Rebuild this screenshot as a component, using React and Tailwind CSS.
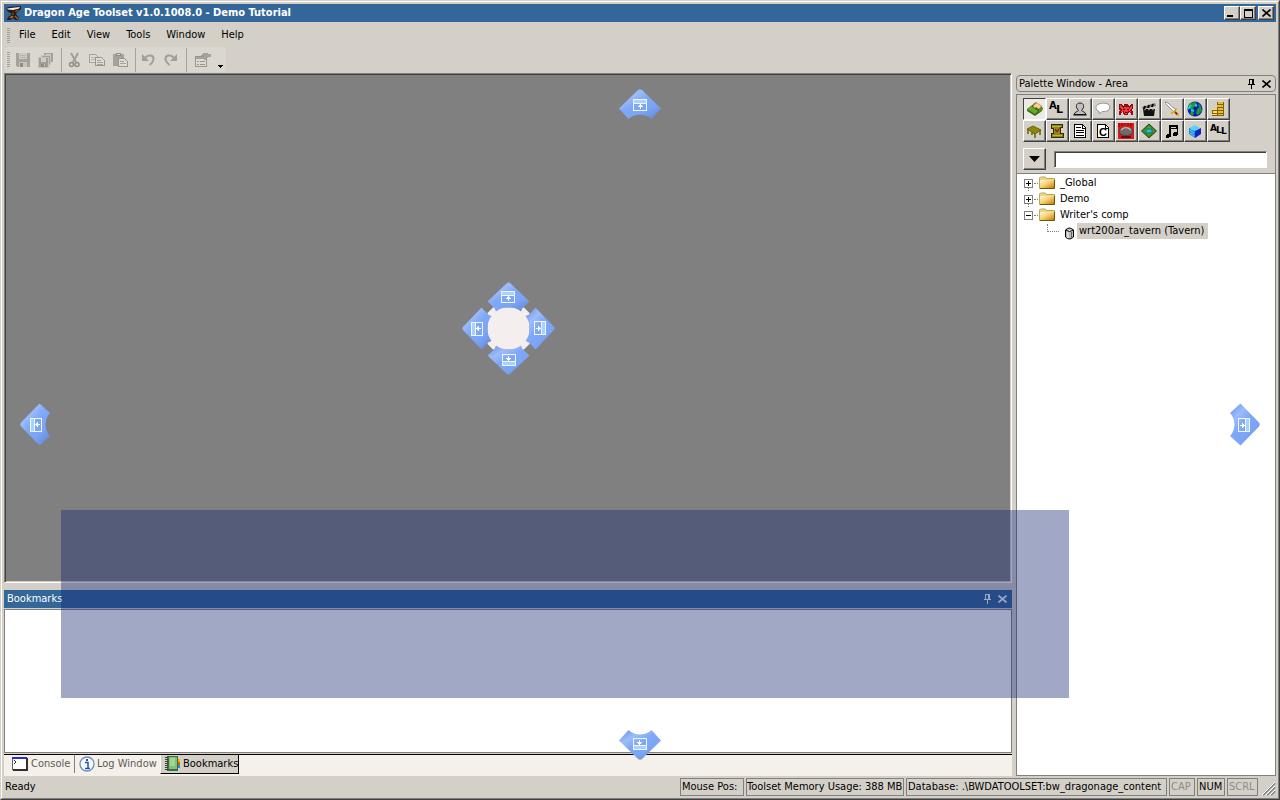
import { useState } from 'react';

const menus = ['File', 'Edit', 'View', 'Tools', 'Window', 'Help'];

const raised =
  'border border-t-white border-l-white border-r-[#404040] border-b-[#404040] shadow-[inset_-1px_-1px_0_#808080]';

function Svg({ children, size = 16, crisp = true }) {
  return (
    <svg
      width={size}
      height={size}
      viewBox="0 0 16 16"
      fill="none"
      shapeRendering={crisp ? 'crispEdges' : 'auto'}
      className="shrink-0"
      aria-hidden="true"
    >
      {children}
    </svg>
  );
}

function AnvilIcon() {
  return (
    <Svg crisp={false}>
      <path d="M0 3l3-1 12-1v3l-4 3-1 2 3 4-1 2H9l-2-2-3 2H1l1-3 3-2V8L2 7z" fill="#2a1a12" />
      <path d="M1 3.500l4-.5 9-1-1 1.500-6 1.500-5-.5z" fill="#f2efe8" />
      <path d="M9 6l4-2-3 3zM3 13l3-2.500L8 12l-3 1z" fill="#b5702c" />
      <path d="M9 11l3 3" stroke="#a0622c" strokeWidth="1.500" />
      <path d="M7 7v3" stroke="#7b5a40" />
    </Svg>
  );
}

/* Toolbar icons, all in the disabled colours */
function SaveIcon() {
  return (
    <Svg>
      <path d="M1 1h14v14H2l-1-1z" fill="#a5a29c" />
      <path d="M4 1h8v6H4z" fill="#cfccc5" />
      <path d="M5 3h6M5 5h6" stroke="#b5b2ab" />
      <path d="M4 10h8v5H4z" fill="#c6c3bc" />
      <path d="M5 11h3v4H5z" fill="#8f8c86" />
    </Svg>
  );
}

function SaveAllIcon() {
  return (
    <Svg>
      <path d="M6 1h9v9H6z" fill="#a5a29c" />
      <path d="M8 2h5v1H8z" fill="#cfccc5" />
      <path d="M3.500 3.500h9v9h-9z" fill="#a5a29c" stroke="#c6c3bc" />
      <path d="M6 5h5v1H6z" fill="#cfccc5" />
      <path d="M.5 5.500h10v10H.5z" fill="#a09d97" stroke="#c6c3bc" />
      <path d="M3 6h5v4H3z" fill="#cfccc5" />
      <path d="M3 12h5v3H3z" fill="#8f8c86" />
      <path d="M6 12h1v2H6z" fill="#cfccc5" />
    </Svg>
  );
}

function CutIcon() {
  return (
    <Svg crisp={false}>
      <path d="M5 1l5 9M12 1L7 10" stroke="#a19e98" strokeWidth="2" />
      <circle cx="5.500" cy="12.500" r="2" stroke="#8f8c86" strokeWidth="1.500" />
      <circle cx="11" cy="12.500" r="2" stroke="#8f8c86" strokeWidth="1.500" />
    </Svg>
  );
}

function CopyIcon() {
  return (
    <Svg>
      <path d="M.5 2.500h6l3 3v5h-9z" fill="#dedbd4" stroke="#a5a29c" />
      <path d="M2 5h4M2 7h4" stroke="#b8b5ae" />
      <path d="M6.500 5.500h6l3 3v5h-9z" fill="#dedbd4" stroke="#999690" />
      <path d="M8 8.500h4M8 10.500h6M8 12h6" stroke="#a5a29c" />
    </Svg>
  );
}

function PasteIcon() {
  return (
    <Svg>
      <path d="M1 2h11v12H1z" fill="#a5a29c" />
      <path d="M4 1h5v3H4z" fill="#8f8c86" />
      <path d="M5 2h3v1H5z" fill="#dedbd4" />
      <path d="M6.500 6.500h6l3 3v5h-9z" fill="#dedbd4" stroke="#999690" />
      <path d="M8 9.500h4M8 11.500h6" stroke="#a5a29c" />
    </Svg>
  );
}

function UndoIcon() {
  return (
    <Svg crisp={false}>
      <path d="M5 6c3-4 9-3 8.500 1.500-.3 2.500-2 4-4 5.500" stroke="#a19e98" strokeWidth="2" />
      <path d="M2 2v7h7z" fill="#a19e98" />
    </Svg>
  );
}

function RedoIcon() {
  return (
    <Svg crisp={false}>
      <path d="M11 6C8 2 2 3 2.500 7.500c.3 2.500 2 3.500 4 5.500" stroke="#a19e98" strokeWidth="2" />
      <path d="M14 2v7H7z" fill="#a19e98" />
    </Svg>
  );
}

function PropertiesIcon() {
  return (
    <Svg>
      <path d="M.5 4.500h11v10H.5z" fill="#dedbd4" stroke="#999690" />
      <path d="M1 5h10v2H1z" fill="#a5a29c" />
      <path d="M2 9.500h2M5 9.500h5M2 12.500h2M5 12.500h5" stroke="#999690" />
      <path d="M5 4l4-3h4v1h3v3h-3l-3 3-2-1 1-3z" fill="#a5a29c" />
    </Svg>
  );
}

/* Palette icons */
function AreaIcon() {
  return (
    <Svg crisp={false}>
      <path d="M0 8l8-6 8 5-1 3-7 5-8-5z" fill="#3d6818" />
      <path d="M0 8l4-3 7 5-3 3z" fill="#68a82c" />
      <path d="M6 3l3-2 6 4-2 4-6-4z" fill="#c76a20" />
      <path d="M6 5l4-3 4 3-2 3-3-2-1 1z" fill="#f1d190" />
      <path d="M12 8l3-2v3l-3 3z" fill="#568e25" />
    </Svg>
  );
}

function AreaListIcon() {
  return (
    <Svg>
      <text x="0" y="8" fontSize="10" fontWeight="bold" fill="#000" fontFamily="DejaVu Sans">A</text>
      <text x="7" y="12" fontSize="11" fontWeight="bold" fill="#000" fontFamily="DejaVu Sans">L</text>
    </Svg>
  );
}

function CreatureIcon() {
  return (
    <Svg crisp={false}>
      <path
        d="M6.500 9.500C3 6 4 2 8 2s5 4 1.500 7.500c0 1 4 1 4.500 4H2c.5-3 4.500-3 4.500-4z"
        fill="#c0c0c0"
        stroke="#202020"
      />
      <path d="M1.500 14h13" stroke="#000" />
    </Svg>
  );
}

function ConversationIcon() {
  return (
    <Svg crisp={false}>
      <path
        d="M4 10.500C0 9 0 4 4 3c3-1.500 7-1 9 0 3 2 2 6-1 7-2 .8-4 .7-5 .5L4.500 13z"
        fill="#fff"
        stroke="#909090"
      />
    </Svg>
  );
}

function PlotIcon() {
  return (
    <Svg>
      <path
        d="M1 3h2l2 2 1-1V3h4v1l1 1 2-2h2v4l-1 3h1v4h-2v-2l-2-1-1 3H6l-1-3-2 1v2H1v-4h1L1 7z"
        fill="#8c1018"
      />
      <path d="M2 4l3 3 1-1h4l1 1 3-3v3l-2 2 1 2-3-1-1 3H7l-1-3-3 1 1-2-2-2z" fill="#f0353c" />
      <path d="M5 8h2v1H5zM9 8h2v1H9zM7 11h2v1H7z" fill="#600008" />
    </Svg>
  );
}

function CutsceneIcon() {
  return (
    <Svg crisp={false}>
      <path d="M1 6L14 2l1 3L2 8z" fill="#777" />
      <path d="M3 8l1-3M7 7l1-3M11 6l1-3" stroke="#000" strokeWidth="2" />
      <path d="M2 8h12l-1 7H3z" fill="#111" />
      <path d="M3 9l2-1M7 9l2-1M11 9l2-1" stroke="#999" />
    </Svg>
  );
}

function SwordIcon() {
  return (
    <Svg crisp={false}>
      <path d="M1 1l3 1 8 7-2 2-7-7z" fill="#fff" stroke="#8e8e8e" />
      <path d="M2 2l8 8" stroke="#fff" />
      <path d="M7 12.500l2-1 3-3V7" stroke="#d7a800" strokeWidth="1.500" />
      <path d="M11 11l3 3" stroke="#b01b18" strokeWidth="2" />
      <path d="M13 14l2 .5" stroke="#eec000" strokeWidth="2" />
    </Svg>
  );
}

function GlobeIcon() {
  return (
    <Svg crisp={false}>
      <circle cx="8" cy="8" r="7.500" fill="#0b18b0" />
      <path d="M3 2l6-1 1 3-3 2-1 3-3-1-2-3zM10 8l4-3 1 5-4 4-2-1zM4 10l3 2-1 3-3-2zM11 2l3 3-2 1z" fill="#1a9a38" />
      <path d="M1 8l3-4M8 4l2 1M4 9l3 1" stroke="#20d8e0" strokeWidth="2" />
    </Svg>
  );
}

function CoinsIcon() {
  return (
    <Svg>
      <path d="M7 1h7v14H7zM2 8h6v7H2z" fill="#80600e" />
      <path d="M8 1h5v2H8zM7 4h6v2H7zM8 7h5v2H8zM8 10h5v2H8zM8 13h5v1H8z" fill="#e8bd2c" />
      <path d="M2 8h5v1H2zM3 10h4v2H3zM2 13h5v1H2z" fill="#ffe060" />
    </Svg>
  );
}

function TableIcon() {
  return (
    <Svg crisp={false}>
      <path d="M1 6l6-3 8 4-6 4z" fill="#8b8610" stroke="#6b6709" />
      <path d="M2 6v5M9 10v5M14 7v5M6 9v3" stroke="#67620a" strokeWidth="1.500" />
    </Svg>
  );
}

function ScriptIcon() {
  return (
    <Svg>
      <path d="M2.500 1.500h11v3h-2v6h3v4h-12v-4h2v-5h-2z" fill="#8a861a" stroke="#302e05" />
      <path d="M3 3h9M4 12h9" stroke="#bdb936" />
      <path d="M6 6l2 3 3-4" stroke="#9c2218" />
    </Svg>
  );
}

function DocumentIcon() {
  return (
    <Svg>
      <path d="M2.500 1.500h8l3 3v10h-11z" fill="#fff" stroke="#000" />
      <path d="M10.500 1v4h3M4 4.500h5M4 7.500h8M4 9.500h8M4 12.500h8" stroke="#000" />
    </Svg>
  );
}

function ClassIcon() {
  return (
    <Svg>
      <path d="M2.500 1.500h8l3 3v10h-11z" fill="#fff" stroke="#000" />
      <path d="M10.500 1v4h3" stroke="#000" />
      <text x="4" y="13" fontSize="11" fontWeight="bold" fill="#000" fontFamily="Liberation Sans">C</text>
    </Svg>
  );
}

function StageIcon() {
  return (
    <Svg crisp={false}>
      <path d="M0 0h16v16H0z" fill="#dc1a1a" />
      <path d="M1 0v4M4 0v3M7 0v2M10 0v3M13 0v4" stroke="#8e0000" />
      <ellipse cx="8" cy="8.500" rx="7" ry="4" fill="#6c6c6c" stroke="#444" />
      <path d="M3 7c3-3 7-3 10 0" stroke="#bcbcbc" strokeWidth="1.500" />
      <path d="M3 13h10v2H3z" fill="#6d0909" />
    </Svg>
  );
}

function TileIcon() {
  return (
    <Svg crisp={false}>
      <path d="M8 1l7.500 7L8 15 .5 8z" fill="#3c8a2a" stroke="#184410" />
      <path d="M8 3l5 5-5 4-5-4z" fill="#54a03c" />
      <path d="M5 6h6v4H5z" fill="#20c5d2" stroke="#1c6c50" />
      <path d="M8 14.500l6.500-6" stroke="#694812" />
    </Svg>
  );
}

function MusicIcon() {
  return (
    <Svg>
      <path d="M5 2h9v10h-1V6H7v8H5z" fill="#000" />
      <path d="M7 4h5v1H7z" fill="#d4d0c8" />
      <path d="M3 11h3v3H5v1H2v-3h1zM10 9h4v3h-1v1H9v-3h1z" fill="#000" />
    </Svg>
  );
}

function ModelIcon() {
  return (
    <Svg crisp={false}>
      <path d="M2 5l6-3 5 3-5 3z" fill="#50d6f4" />
      <path d="M2 5l6 3v7l-6-4z" fill="#168de0" />
      <path d="M8 8l6-3v6l-6 4z" fill="#1222c0" />
      <path d="M3 7l4 3M3 10l4 3M5 6v6" stroke="#86e6f8" strokeDasharray="1 1" />
    </Svg>
  );
}

function AllIcon() {
  return (
    <svg width="18" height="16" viewBox="0 0 18 16" aria-hidden="true">
      <text x="0" y="8" fontSize="9" fontWeight="bold" fontFamily="DejaVu Sans">A</text>
      <text x="6" y="10" fontSize="9" fontWeight="bold" fontFamily="DejaVu Sans">L</text>
      <text x="11" y="11" fontSize="9" fontWeight="bold" fontFamily="DejaVu Sans">L</text>
    </svg>
  );
}

const paletteItems = [
  { label: 'Area', Icon: AreaIcon },
  { label: 'Area layout', Icon: AreaListIcon },
  { label: 'Creature', Icon: CreatureIcon },
  { label: 'Conversation', Icon: ConversationIcon },
  { label: 'Plot', Icon: PlotIcon },
  { label: 'Cutscene', Icon: CutsceneIcon },
  { label: 'Item', Icon: SwordIcon },
  { label: 'Map', Icon: GlobeIcon },
  { label: 'Merchant', Icon: CoinsIcon },
  { label: 'Placeable', Icon: TableIcon },
  { label: 'Plot script', Icon: ScriptIcon },
  { label: 'Script', Icon: DocumentIcon },
  { label: 'Class', Icon: ClassIcon },
  { label: 'Stage', Icon: StageIcon },
  { label: 'Trigger', Icon: TileIcon },
  { label: 'Sound', Icon: MusicIcon },
  { label: 'Model', Icon: ModelIcon },
  { label: 'All', Icon: AllIcon },
];

const toolbarGroups = [
  [
    { label: 'Save', Icon: SaveIcon },
    { label: 'Save all', Icon: SaveAllIcon },
  ],
  [
    { label: 'Cut', Icon: CutIcon },
    { label: 'Copy', Icon: CopyIcon },
    { label: 'Paste', Icon: PasteIcon },
  ],
  [
    { label: 'Undo', Icon: UndoIcon },
    { label: 'Redo', Icon: RedoIcon },
  ],
];

function PinIcon() {
  return (
    <svg width="9" height="10" viewBox="0 0 9 10" fill="none" stroke="currentColor" shapeRendering="crispEdges" aria-hidden="true">
      <path d="M2.500 5V.5h4V5M5.500 1v4M1 5.500h7M4.500 6v4" />
    </svg>
  );
}

function CloseIcon() {
  return (
    <svg width="9" height="8" viewBox="0 0 9 8" fill="none" stroke="currentColor" aria-hidden="true">
      <path d="M.5.5l8 7M8.500.5l-8 7" strokeWidth="1.600" />
    </svg>
  );
}

function Grip() {
  return (
    <svg width="3" height="15" viewBox="0 0 3 15" shapeRendering="crispEdges" aria-hidden="true">
      <path d="M1.500 0v15" stroke="#a19e97" strokeWidth="3" strokeDasharray="1 1" />
    </svg>
  );
}

/* The light always comes from the upper left, so the gradient is turned back by the guide's angle */
function GuideGradient({ id, angle }) {
  return (
    <linearGradient id={id} x1="0.1" y1="0" x2="0.9" y2="1" gradientTransform={`rotate(${-angle} 0.5 0.5)`}>
      <stop offset="0" stopColor="#6b95e6" />
      <stop offset="0.250" stopColor="#9dbcfa" />
      <stop offset="0.450" stopColor="#7fa8f8" />
      <stop offset="0.700" stopColor="#7ba4f6" />
      <stop offset="1" stopColor="#6288d4" />
    </linearGradient>
  );
}

function GuideGlyph() {
  return (
    <g shapeRendering="crispEdges">
      <path d="M14 10h14v4H14z" fill="#a9d1ff" />
      <path d="M14.500 10.500h13v11h-13zM14 14.500h14" fill="none" stroke="#eef7ff" />
      <path d="M21 15h1v1h1v1h1v1h-2v2h-1v-2h-2v-1h1v-1h1z" fill="#fff" />
    </g>
  );
}

const guideTurn = {
  top: { w: 42, h: 31, angle: 0, transform: undefined },
  bottom: { w: 42, h: 31, angle: 180, transform: 'rotate(180 21 15.5)' },
  left: { w: 31, h: 43, angle: -90, transform: 'translate(0 42) rotate(-90)' },
  right: { w: 31, h: 43, angle: 90, transform: 'translate(31 0) rotate(90)' },
};

function DockGuide({ side, className }) {
  const { w, h, angle, transform } = guideTurn[side];
  return (
    <svg width={w} height={h} viewBox={`0 0 ${w} ${h}`} className={`absolute ${className}`} aria-hidden="true">
      <GuideGradient id={`guide-${side}`} angle={angle} />
      <g transform={transform}>
        <path
          d="M19 1q2-1.500 4 0l19 18.500L32.500 30 30 28q-9-5-18 0l-2.500 2L0 19.500z"
          fill={`url(#guide-${side})`}
        />
        <GuideGlyph />
      </g>
    </svg>
  );
}

function CenterGuide() {
  return (
    <svg
      width="94"
      height="94"
      viewBox="-1 -1 94 94"
      className="absolute top-1/2 left-1/2 -translate-x-1/2 -translate-y-1/2"
      aria-hidden="true"
    >
      <path d="M31 25.500h31l5.500 5.500v31L62 67.500H31L25.500 62V31z" fill="#f4eeee" />
      {[0, 90, 180, 270].map((angle) => (
        <g key={angle} transform={`rotate(${angle} 46.5 46.5)`}>
          <GuideGradient id={`guide-center-${angle}`} angle={angle} />
          <path
            d="M45 1q1.500-1.500 3 0l19.500 18.500-7 6.500-1.500 3.500A21 21 0 0 0 34 29.500L32.500 26l-7-6.500z"
            fill={`url(#guide-center-${angle})`}
          />
          <g transform="translate(25 -1)">
            <GuideGlyph />
          </g>
        </g>
      ))}
      <circle cx="46.500" cy="46.500" r="20.500" fill="#f4eeee" />
    </svg>
  );
}

function TitleBar() {
  const button = `flex h-[14px] items-center justify-center bg-[#d4d0c8] ${raised}`;
  return (
    <header className="flex h-[18px] shrink-0 items-center bg-[#336699] pr-0.5 pl-0.5 text-white">
      <AnvilIcon />
      <h1 className="ml-0.5 flex-1 truncate font-['DejaVu_Sans_Condensed','DejaVu_Sans',sans-serif] text-[11px] font-bold">
        Dragon Age Toolset v1.0.1008.0 - Demo Tutorial
      </h1>
      <button type="button" aria-label="Minimize" className={`${button} w-4`}>
        <span className="mt-1.5 mr-1 h-0.5 w-1.5 bg-black" />
      </button>
      <button type="button" aria-label="Maximize" className={`${button} w-4`}>
        <span className="h-[9px] w-[9px] border border-t-2 border-black" />
      </button>
      <button type="button" aria-label="Close" className={`${button} ml-0.5 w-4 text-black`}>
        <CloseIcon />
      </button>
    </header>
  );
}

function Toolbar() {
  return (
    <div className="ml-px flex h-[25px] w-[221px] items-center rounded bg-[#dad7cf] pl-0.5">
      <Grip />
      <div className="ml-0.5 flex h-full items-center">
        {toolbarGroups.map((group) => (
          <div key={group[0].label} className="mr-px flex h-6 items-center border-r border-[#a5a29c] pr-[3px]">
            {group.map(({ label, Icon }) => (
              <button
                key={label}
                type="button"
                aria-label={label}
                disabled
                className="flex h-6 w-[23px] items-center justify-start pl-[3px]"
              >
                <Icon />
              </button>
            ))}
          </div>
        ))}
        <button type="button" aria-label="Properties" disabled className="ml-1 flex h-6 w-[22px] items-center justify-center">
          <PropertiesIcon />
        </button>
        <button type="button" aria-label="Toolbar options" className="flex h-6 w-3 items-end justify-center pb-1">
          <svg width="5" height="3" viewBox="0 0 5 3" shapeRendering="crispEdges" aria-hidden="true">
            <path d="M0 0h5v1H4v1H3v1H2V2H1V1H0z" />
          </svg>
        </button>
      </div>
    </div>
  );
}

function BookmarksPanel() {
  return (
    <section className="flex h-[186px] shrink-0 flex-col">
      <div className="flex h-[18px] shrink-0 items-center bg-[#336699] pr-[5px] pl-[3px] text-white">
        <h2 className="flex-1">Bookmarks</h2>
        <button type="button" aria-label="Pin bookmarks" className="mr-1.5">
          <PinIcon />
        </button>
        <button type="button" aria-label="Close bookmarks">
          <CloseIcon />
        </button>
      </div>
      <div className="mt-px flex-1 border border-[#808080] bg-white" />
      <nav className="mt-px flex h-[22px] shrink-0 items-start border-t border-black bg-[#f5f0ea] pl-2 text-[#5c5a56]">
        <button type="button" className="flex h-[18px] w-[63px] items-center gap-[3px] border-r border-[#808080]">
          <Svg>
            <path d="M1 2h15v13H1z" fill="#303030" />
            <path d="M1 3h13v10H1z" fill="#fff" />
            <path d="M0 1h15v2H0z" fill="#2a2ad0" />
            <path d="M0 3.500h1M.5 3v11" stroke="#606060" />
            <path d="M2 4l2 2-2 2" stroke="#303030" />
          </Svg>
          Console
        </button>
        <button type="button" className="flex h-[18px] w-[85px] items-center gap-0.5 pl-1">
          <Svg crisp={false}>
            <circle cx="8" cy="8" r="7" fill="#f5f9fd" stroke="#6f92b4" strokeWidth="1.300" />
            <path d="M6 6.500h3v5.500M6 12.500h5" stroke="#2554a8" strokeWidth="1.500" />
            <path d="M7 3h2v2H7z" fill="#2554a8" />
          </Svg>
          Log Window
        </button>
        <button
          type="button"
          className="flex h-[19px] w-[79px] items-center gap-0.5 border-r border-b border-l border-r-black border-b-black border-l-white bg-[#d4d0c8] pl-1 text-black"
        >
          <Svg>
            <path d="M2 0h11v15H2z" fill="#3c6f38" />
            <path d="M4 1h8v12H4z" fill="#7fbf76" />
            <path d="M5 2h5v8H5z" fill="#a2d49a" />
            <path d="M1.500 1v14" stroke="#404040" strokeWidth="3" strokeDasharray="1 1" />
            <path d="M13 3h2v3h-2z" fill="#f0b400" />
            <path d="M13 6h2v3h-2z" fill="#e0541c" />
            <path d="M13 9h2v3h-2z" fill="#2b8ad8" />
          </Svg>
          Bookmarks
        </button>
      </nav>
    </section>
  );
}

function FolderIcon() {
  return (
    <svg width="16" height="14" viewBox="0 0 16 14" className="shrink-0" aria-hidden="true">
      <defs>
        <linearGradient id="folder" x1="0" y1="0" x2="1" y2="1">
          <stop offset="0" stopColor="#fff6d0" />
          <stop offset="0.450" stopColor="#f6d57a" />
          <stop offset="1" stopColor="#c87c00" />
        </linearGradient>
      </defs>
      <path d="M.5 2l1-1h5l1 1.500h8v10H.5z" fill="#efd58c" stroke="#c0a458" />
      <path d="M1 4h14v8H1z" fill="url(#folder)" />
      <path d="M1 12.500h14.500V4" fill="none" stroke="#6f5414" />
    </svg>
  );
}

function TreeFolder({ label, open, last, onToggle }) {
  return (
    <li className="flex h-4 items-center">
      <button
        type="button"
        onClick={onToggle}
        aria-expanded={open}
        aria-label={label}
        className="flex h-4 w-[9px] items-center justify-center"
      >
        <svg width="9" height="16" viewBox="0 0 9 16" fill="none" shapeRendering="crispEdges" aria-hidden="true">
          {!last && <path d="M4.500 13v3" stroke="#808080" strokeDasharray="1 1" />}
          <path d="M.5 4.500h8v8h-8z" fill="#fff" stroke="#808080" />
          <path d={open ? 'M2 8.500h5' : 'M2 8.500h5M4.500 6v5'} stroke="#000" />
        </svg>
      </button>
      <span className="mr-px ml-px w-1 border-t border-dotted border-[#808080]" />
      <FolderIcon />
      <span className="ml-[5px]">{label}</span>
    </li>
  );
}

function PalettePanel() {
  const [active, setActive] = useState('Area');
  const [filter, setFilter] = useState('');
  const [open, setOpen] = useState(true);

  return (
    <aside className="flex w-[260px] shrink-0 flex-col pt-0.5">
      <div className="flex h-[17px] shrink-0 items-center rounded-sm border border-[#808080] pr-1 pl-0.5">
        <h2 className="flex-1">Palette Window - Area</h2>
        <button type="button" aria-label="Pin palette" className="mr-1.5">
          <PinIcon />
        </button>
        <button type="button" aria-label="Close palette">
          <CloseIcon />
        </button>
      </div>
      <div className="mt-0.5 flex flex-1 flex-col border border-[#808080]">
        <div className="border-b border-[#808080] pt-[3px] pr-2 pb-[3px] pl-1.5">
          <div className="grid w-[207px] grid-cols-9">
            {paletteItems.map(({ label, Icon }) => (
              <button
                key={label}
                type="button"
                aria-label={label}
                onClick={() => setActive(label)}
                className={
                  active === label
                    ? 'flex h-[22px] items-center border border-t-[#404040] border-r-white border-b-white border-l-[#404040] bg-[#eceae6] pl-[3px]'
                    : `flex h-[22px] items-center pl-0.5 ${raised}`
                }
              >
                <Icon />
              </button>
            ))}
          </div>
          <div className="mt-1.5 flex items-center gap-2">
            <button type="button" aria-label="Filter options" className={`flex h-[22px] w-[23px] items-center justify-center ${raised}`}>
              <svg width="11" height="6" viewBox="0 0 11 6" aria-hidden="true">
                <path d="M0 0h11L5.500 6z" />
              </svg>
            </button>
            <input
              type="text"
              aria-label="Filter"
              value={filter}
              onChange={(e) => setFilter(e.target.value)}
              className="h-[17px] min-w-0 flex-1 border border-t-[#808080] border-r-white border-b-white border-l-[#808080] bg-white px-1 shadow-[inset_1px_1px_0_#404040] outline-none"
            />
          </div>
        </div>
        <ul className="flex-1 bg-white pt-px pl-[7px]">
          <TreeFolder label="_Global" />
          <TreeFolder label="Demo" />
          <TreeFolder label="Writer's comp" open={open} last onToggle={() => setOpen(!open)} />
          {open && (
            <li className="flex h-4 items-center pl-[23px]">
              <span className="mb-[7px] h-2 w-3 border-b border-l border-dotted border-[#808080]" />
              <svg width="9" height="13" viewBox="0 0 9 13" className="mt-1 ml-[6px] shrink-0" aria-hidden="true">
                <path d="M.5 3Q4.500-1 8.500 3v7q-4 4-8 0z" fill="#b8b8b8" stroke="#000" />
                <path d="M.5 3q4 3 8 0" fill="#fff" stroke="#000" />
                <path d="M3 5v6" stroke="#fff" />
                <path d="M6.500 5v6" stroke="#666" />
              </svg>
              <span className="ml-[3px] flex h-4 items-center bg-[#d4d0c8] pr-1 pl-0.5">
                wrt200ar_tavern (Tavern)
              </span>
            </li>
          )}
        </ul>
      </div>
    </aside>
  );
}

function StatusBar() {
  const cell = 'flex h-[18px] items-center border border-[#808080] whitespace-nowrap';
  return (
    <footer className="flex h-5 shrink-0 items-end gap-0.5">
      <span className="flex h-[18px] flex-1 items-center pl-px">Ready</span>
      <span className={`${cell} w-16 pl-px`}>Mouse Pos:</span>
      <span className={`${cell} w-[158px]`}>Toolset Memory Usage: 388 MB</span>
      <span className={`${cell} w-[261px] pl-px`}>Database: .\BWDATOOLSET:bw_dragonage_content</span>
      <span className={`${cell} w-[26px] pl-px text-[#908d87]`}>CAP</span>
      <span className={`${cell} w-7 pl-px`}>NUM</span>
      <span className={`${cell} w-[31px] pl-px text-[#908d87]`}>SCRL</span>
      <svg width="16" height="16" viewBox="0 0 16 16" fill="none" aria-hidden="true">
        <path d="M3 15L15 3M7 15l8-8M11 15l4-4" stroke="#808080" strokeWidth="1.800" />
        <path d="M2 15L15 2M6 15l9-9M10 15l5-5" stroke="#fff" />
      </svg>
    </footer>
  );
}

export default function App() {
  return (
    <div className="h-screen border border-t-[#d4d0c8] border-r-[#404040] border-b-[#404040] border-l-[#d4d0c8] bg-[#d4d0c8] font-['DejaVu_Sans_Condensed','DejaVu_Sans',sans-serif] text-[11px] leading-4 text-black">
      <div className="flex h-full flex-col border border-t-white border-r-[#808080] border-b-[#808080] border-l-white p-0.5">
        <TitleBar />
        <nav className="flex h-[25px] shrink-0 items-center pt-px pl-[3px]">
          <Grip />
          <div className="ml-px flex">
            {menus.map((menu) => (
              <button key={menu} type="button" className="px-2">
                {menu}
              </button>
            ))}
          </div>
        </nav>
        <Toolbar />
        <main className="relative mt-px flex min-h-0 flex-1 gap-1">
          <div className="flex min-w-0 flex-1 flex-col">
            <div className="relative mb-[7px] min-h-0 flex-1 border border-t-[#808080] border-r-white border-b-white border-l-[#808080] bg-[#808080] shadow-[inset_1px_1px_0_#404040,inset_-1px_-1px_0_#d4d0c8]">
              <CenterGuide />
            </div>
            <BookmarksPanel />
          </div>
          <PalettePanel />

          {/* Drop preview and the outer dock guides float over the workspace */}
          <div className="absolute top-[437px] right-[207px] bottom-[78px] left-[57px] bg-[#112570]/40" />
          <DockGuide side="top" className="top-4 left-1/2 -translate-x-1/2" />
          <DockGuide side="bottom" className="bottom-4 left-1/2 -translate-x-1/2" />
          <DockGuide side="left" className="top-1/2 left-4 -translate-y-1/2" />
          <DockGuide side="right" className="top-1/2 right-4 -translate-y-1/2" />
        </main>
        <StatusBar />
      </div>
    </div>
  );
}
